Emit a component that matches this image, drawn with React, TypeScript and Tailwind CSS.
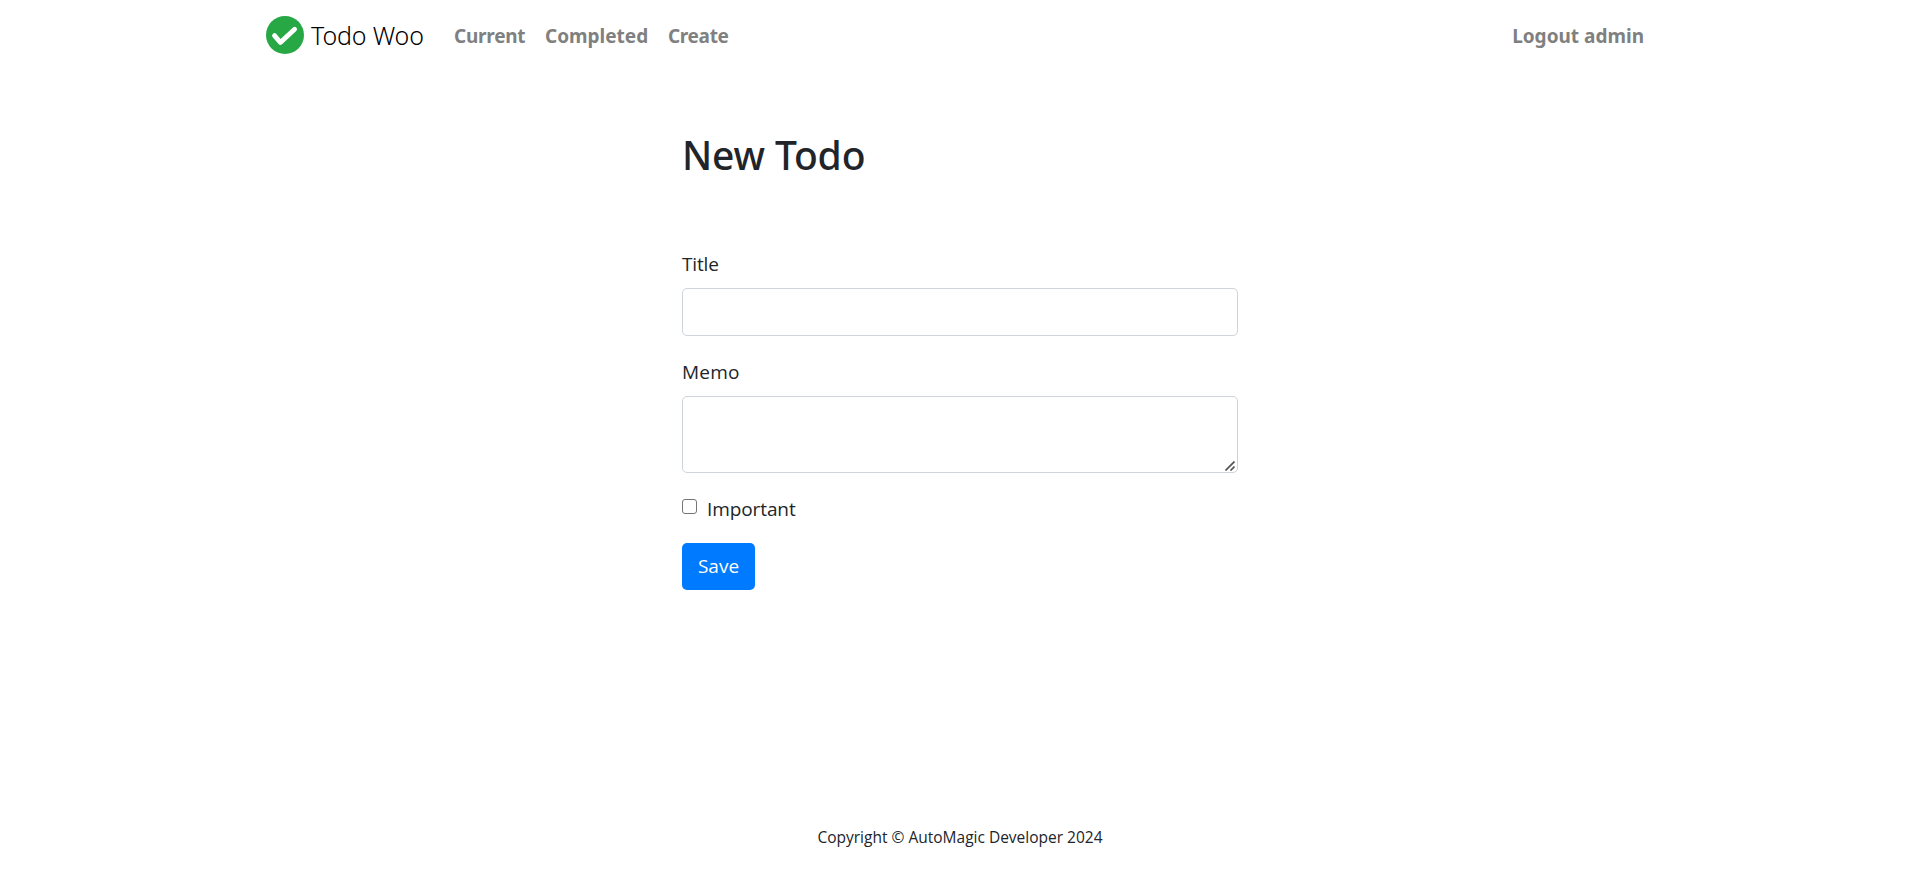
function CheckCircle() {
  return (
    <svg viewBox="0 0 38 38" className="h-[38px] w-[38px] shrink-0" aria-hidden="true">
      <circle cx="19" cy="19" r="19" fill="#28a745" />
      <path d="M8.5 19.6l5.9 6.9 14.2-13.3" fill="none" stroke="#fff" strokeWidth="4.8" strokeLinecap="round" strokeLinejoin="round" />
    </svg>
  );
}

function ResizeGrip() {
  return (
    <svg viewBox="0 0 10 10" className="pointer-events-none absolute right-[3px] bottom-[2px] h-[10px] w-[10px]" aria-hidden="true">
      <path d="M0.5 9.5l9-9M5.5 9.5l4-4" fill="none" stroke="#555" strokeWidth="1.7" />
    </svg>
  );
}

function Navbar() {
  return (
    <nav className="flex h-[70px] items-center pr-[276px] pl-[266px] text-[19px] leading-[30px] font-bold text-[#808080]">
      <a href="#" className="flex items-center gap-[7px]">
        <CheckCircle />
        <span className="w-[143px] text-[25px] leading-[38px] font-light tracking-[-0.15px] whitespace-nowrap text-black">Todo Woo</span>
      </a>
      <a href="#" className="w-[91px] pt-px tracking-[-0.25px]">Current</a>
      <a href="#" className="w-[123px] pt-px tracking-[0px]">Completed</a>
      <a href="#" className="pt-px tracking-[-0.35px]">Create</a>
      <a href="#" className="ml-auto pt-px">Logout admin</a>
    </nav>
  );
}

export default function App() {
  return (
    <div className="flex h-[878px] flex-col bg-white font-['Noto_Sans','Open_Sans',sans-serif] text-[#212529]">
      <Navbar />
      <main className="mx-auto w-[556px] pt-[60px]">
        <h1 className="pb-[69px] text-[39px] leading-[49px] font-medium tracking-[-0.15px]">New Todo</h1>
        <form className="flex flex-col items-start font-['Open_Sans','Noto_Sans',sans-serif] text-[19px] leading-[33px]">
          <label htmlFor="title" className="mb-[7px] tracking-[-0.15px]">Title</label>
          <input id="title" type="text" className="mb-[20px] h-[48px] w-full rounded-[5px] border border-[#ced4da] px-[15px] outline-none" />
          <label htmlFor="memo" className="mb-[7px] tracking-[0.2px]">Memo</label>
          <div className="relative mb-[20px] w-full">
            <textarea id="memo" className="block h-[77px] w-full resize-none rounded-[5px] border border-[#ced4da] px-[15px] outline-none" />
            <ResizeGrip />
          </div>
          <div className="mb-[20px] flex h-[30px] gap-[10px]">
            <input id="important" type="checkbox" className="mt-[6px] h-[15px] w-[15px] appearance-none rounded-[3px] border border-[#767676] bg-white" />
            <label htmlFor="important" className="tracking-[-0.1px]">Important</label>
          </div>
          <button type="button" className="h-[47px] w-[73px] rounded-[5px] bg-[#007bff] text-white">Save</button>
        </form>
      </main>
      <footer className="mt-auto pb-[29px] text-center font-['Open_Sans','Noto_Sans',sans-serif] text-[15.5px] leading-[24px]">
        Copyright © AutoMagic Developer 2024
      </footer>
    </div>
  );
}
